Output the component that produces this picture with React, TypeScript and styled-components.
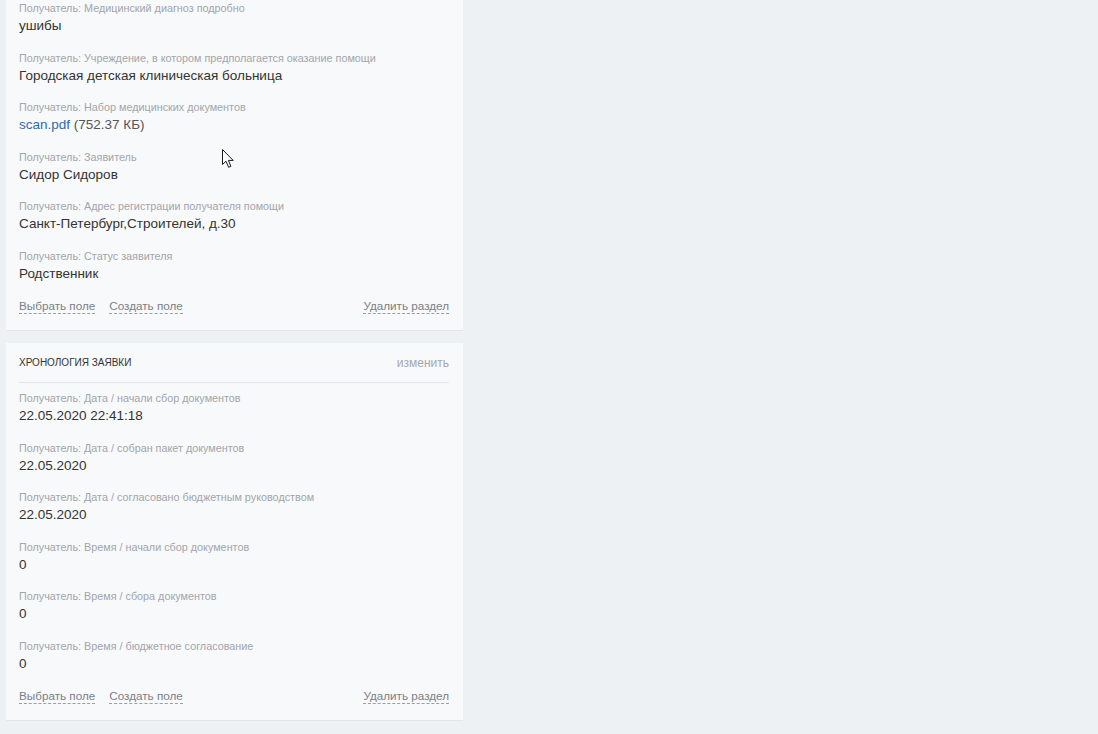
import React from "react";
import styled, { createGlobalStyle } from "styled-components";

const Global = createGlobalStyle`
  html, body { margin: 0; padding: 0; background: #eef1f4; }
  body { font-family: "Liberation Sans", Arial, sans-serif; }
  * { box-sizing: border-box; }
`;

const Page = styled.div`
  position: relative;
  width: 1098px;
  height: 734px;
  overflow: hidden;
  padding: 0 0 0 6px;
  display: flex;
  flex-direction: column;
  gap: 13px;
`;

const Card = styled.section<{ $top?: boolean }>`
  width: 457px;
  background: #f8f9fb;
  box-shadow: 0 1px 0 #e2e5e9;
  padding: ${(p) => (p.$top ? "0" : "10px")} 14px 13px 13px;
  display: flex;
  flex-direction: column;
`;

const Header = styled.div`
  display: flex;
  justify-content: space-between;
  align-items: center;
  height: 20px;
  border-bottom: 1px solid #e4e6e9;
  box-sizing: content-box;
  padding-bottom: 9px;
  margin-bottom: 7.5px;
`;

const Title = styled.h3`
  margin: 0;
  font-size: 10px;
  font-weight: normal;
  text-transform: uppercase;
  color: #333;
`;

const Edit = styled.span`
  font-size: 12px;
  color: #a5a8ad;
`;

const Field = styled.div`
  display: flex;
  flex-direction: column;
  margin-bottom: 13.6px;
`;

const Label = styled.div`
  font-size: 10.8px;
  line-height: 16px;
  color: #a2a5aa;
`;

const Value = styled.div`
  font-size: 13.5px;
  line-height: 20px;
  color: #333;
`;

const Link = styled.a`
  color: #2c6cb4;
  text-decoration: none;
`;

const Size = styled.span`
  color: #555;
`;

const Actions = styled.div`
  display: flex;
  align-items: center;
  gap: 14px;
  height: 20px;
  margin-top: -1px;
`;

const Action = styled.span<{ $right?: boolean }>`
  font-size: 11.7px;
  line-height: 14px;
  color: #7c8087;
  border-bottom: 1px dashed #9a9da3;
  margin-left: ${(p) => (p.$right ? "auto" : "0")};
`;

const Cursor = styled.svg`
  position: absolute;
  left: 222px;
  top: 149px;
`;

type F = { label: string; value: React.ReactNode };

const first: F[] = [
  { label: "Получатель: Медицинский диагноз подробно", value: "ушибы" },
  {
    label: "Получатель: Учреждение, в котором предполагается оказание помощи",
    value: "Городская детская клиническая больница",
  },
  {
    label: "Получатель: Набор медицинских документов",
    value: (
      <>
        <Link href="#">scan.pdf</Link> <Size>(752.37 КБ)</Size>
      </>
    ),
  },
  { label: "Получатель: Заявитель", value: "Сидор Сидоров" },
  {
    label: "Получатель: Адрес регистрации получателя помощи",
    value: "Санкт-Петербург,Строителей, д.30",
  },
  { label: "Получатель: Статус заявителя", value: "Родственник" },
];

const second: F[] = [
  { label: "Получатель: Дата / начали сбор документов", value: "22.05.2020 22:41:18" },
  { label: "Получатель: Дата / собран пакет документов", value: "22.05.2020" },
  { label: "Получатель: Дата / согласовано бюджетным руководством", value: "22.05.2020" },
  { label: "Получатель: Время / начали сбор документов", value: "0" },
  { label: "Получатель: Время / сбора документов", value: "0" },
  { label: "Получатель: Время / бюджетное согласование", value: "0" },
];

const Fields = ({ items }: { items: F[] }) => (
  <>
    {items.map((f, i) => (
      <Field key={i}>
        <Label>{f.label}</Label>
        <Value>{f.value}</Value>
      </Field>
    ))}
    <Actions>
      <Action>Выбрать поле</Action>
      <Action>Создать поле</Action>
      <Action $right>Удалить раздел</Action>
    </Actions>
  </>
);

export default function App() {
  return (
    <>
      <Global />
      <Page>
        <Card $top>
          <Fields items={first} />
        </Card>
        <Card>
          <Header>
            <Title>Хронология заявки</Title>
            <Edit>изменить</Edit>
          </Header>
          <Fields items={second} />
        </Card>
        <Cursor width="13" height="20" viewBox="0 0 13 20">
          <path
            d="M0.5 0.5 L0.5 15.5 L4 12.2 L6.6 18.3 L8.9 17.3 L6.4 11.4 L11.2 11.4 Z"
            fill="#fff"
            stroke="#1a1a1a"
            strokeWidth="1"
          />
        </Cursor>
      </Page>
    </>
  );
}
